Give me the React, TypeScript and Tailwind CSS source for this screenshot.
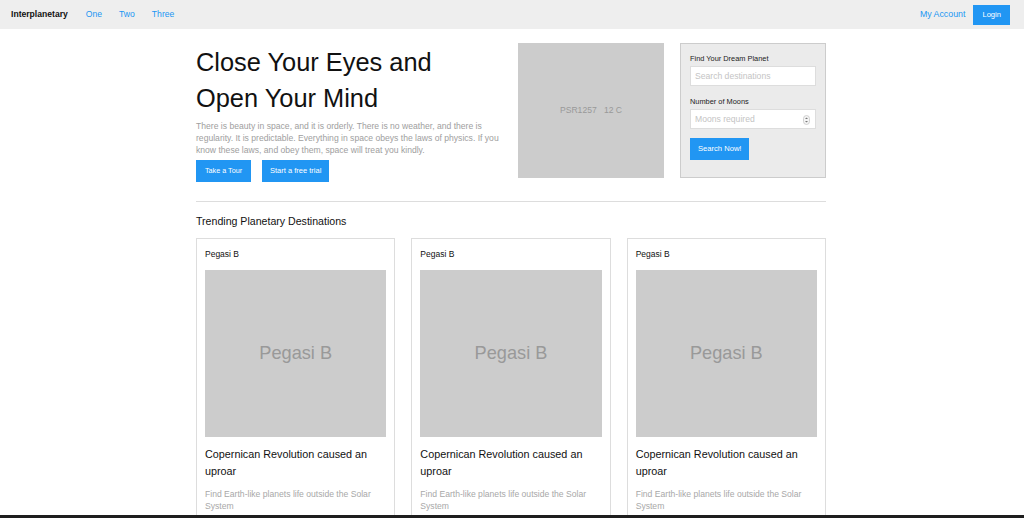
import React from 'react';

const cards = [0, 1, 2];

const SpinnerIcon: React.FC = () => (
    <svg width="7" height="10" viewBox="0 0 7 10" className="absolute right-[5px] top-[5px]">
        <rect x="0.5" y="0.5" width="6" height="9" rx="3" fill="#f4f4f4" stroke="#c8c8c8" strokeWidth="0.8" />
        <path d="M2 4 L3.5 2.5 L5 4 Z" fill="#777" />
        <path d="M2 6 L3.5 7.5 L5 6 Z" fill="#777" />
    </svg>
);

const App: React.FC = () => {
    return (
        <div className="min-h-screen bg-white font-['Liberation_Sans',Arial,sans-serif] text-[#111]">
            <nav className="h-[29px] bg-[#eeeeee] flex items-center justify-between pl-[11px] pr-[14px]">
                <div className="flex items-center gap-[17px]">
                    <span className="font-bold text-[8.6px] text-[#111] mr-[1px]">Interplanetary</span>
                    <a className="text-[8.6px] text-[#2196f3]">One</a>
                    <a className="text-[8.6px] text-[#2196f3]">Two</a>
                    <a className="text-[8.6px] text-[#2196f3]">Three</a>
                </div>
                <div className="flex items-center gap-[8px]">
                    <a className="text-[8.8px] text-[#2196f3]">My Account</a>
                    <button className="h-[20px] px-[9px] bg-[#2196f3] text-white text-[7.6px]">Login</button>
                </div>
            </nav>

            <main className="w-[632px] mx-auto pr-[2px] pt-[14px]">
                <div className="flex gap-4 items-start">
                    <div className="flex-1">
                        <h1 className="mt-[1px] text-[25.4px] leading-[36px] text-[#111]">
                            Close Your Eyes and
                            <br />
                            Open Your Mind
                        </h1>
                        <p className="mt-[4px] text-[8.6px] leading-[12px] text-[#9e9e9e]">
                            There is beauty in space, and it is orderly. There is no weather, and there is regularity. It is predictable. Everything in space obeys the laws of physics. If you know these laws, and obey them, space will treat you kindly.
                        </p>
                        <div className="mt-[4px] flex gap-[11px]">
                            <button className="h-[22px] px-[9px] bg-[#2196f3] text-white text-[7.2px]">Take a Tour</button>
                            <button className="h-[22px] px-[8px] bg-[#2196f3] text-white text-[7.5px]">Start a free trial</button>
                        </div>
                    </div>
                    <div className="w-[146px] h-[135px] bg-[#cccccc] flex items-center justify-center">
                        <span className="text-[8.6px] text-[#999] whitespace-pre">PSR1257   12 C</span>
                    </div>
                    <div className="w-[146px] h-[135px] bg-[#ebebeb] border border-[#cccccc] px-[9px] pt-[9px]">
                        <div className="text-[7.4px] leading-[12px] text-[#222]">Find Your Dream Planet</div>
                        <div className="mt-[1px] h-[20px] bg-white border border-[#dddddd] flex items-center px-[4px]">
                            <span className="text-[8.6px] text-[#c4c4c4]">Search destinations</span>
                        </div>
                        <div className="mt-[10px] text-[7.4px] leading-[12px] text-[#222]">Number of Moons</div>
                        <div className="relative mt-[1px] h-[20px] bg-white border border-[#dddddd] flex items-center px-[4px]">
                            <span className="text-[8.6px] text-[#c4c4c4]">Moons required</span>
                            <SpinnerIcon />
                        </div>
                        <button className="mt-[9px] h-[22px] px-[8px] bg-[#2196f3] text-white text-[7.6px]">Search Now!</button>
                    </div>
                </div>

                <div className="mt-[19px] border-t border-[#dddddd]" />

                <h2 className="mt-[12px] text-[10.6px] leading-[14px] text-[#111]">Trending Planetary Destinations</h2>

                <div className="mt-[10px] grid grid-cols-3 gap-4">
                    {cards.map((i) => (
                        <div key={i} className="border border-[#dddddd] px-[8px] pt-[9px] pb-[10px]">
                            <div className="text-[8.5px] leading-[12px] text-[#111]">Pegasi B</div>
                            <div className="mt-[10px] h-[167px] bg-[#cccccc] flex items-center justify-center">
                                <span className="text-[18.2px] text-[#999]">Pegasi B</span>
                            </div>
                            <div className="mt-[9px] text-[10.8px] leading-[17px] text-[#111]">Copernican Revolution caused an uproar</div>
                            <div className="mt-[8px] text-[8.6px] leading-[12px] text-[#a8a8a8]">Find Earth-like planets life outside the Solar System</div>
                        </div>
                    ))}
                </div>
            </main>

            <div className="fixed bottom-0 left-0 right-0 h-[3px] bg-[#1e1e1e]" />
        </div>
    );
};

export default App;
